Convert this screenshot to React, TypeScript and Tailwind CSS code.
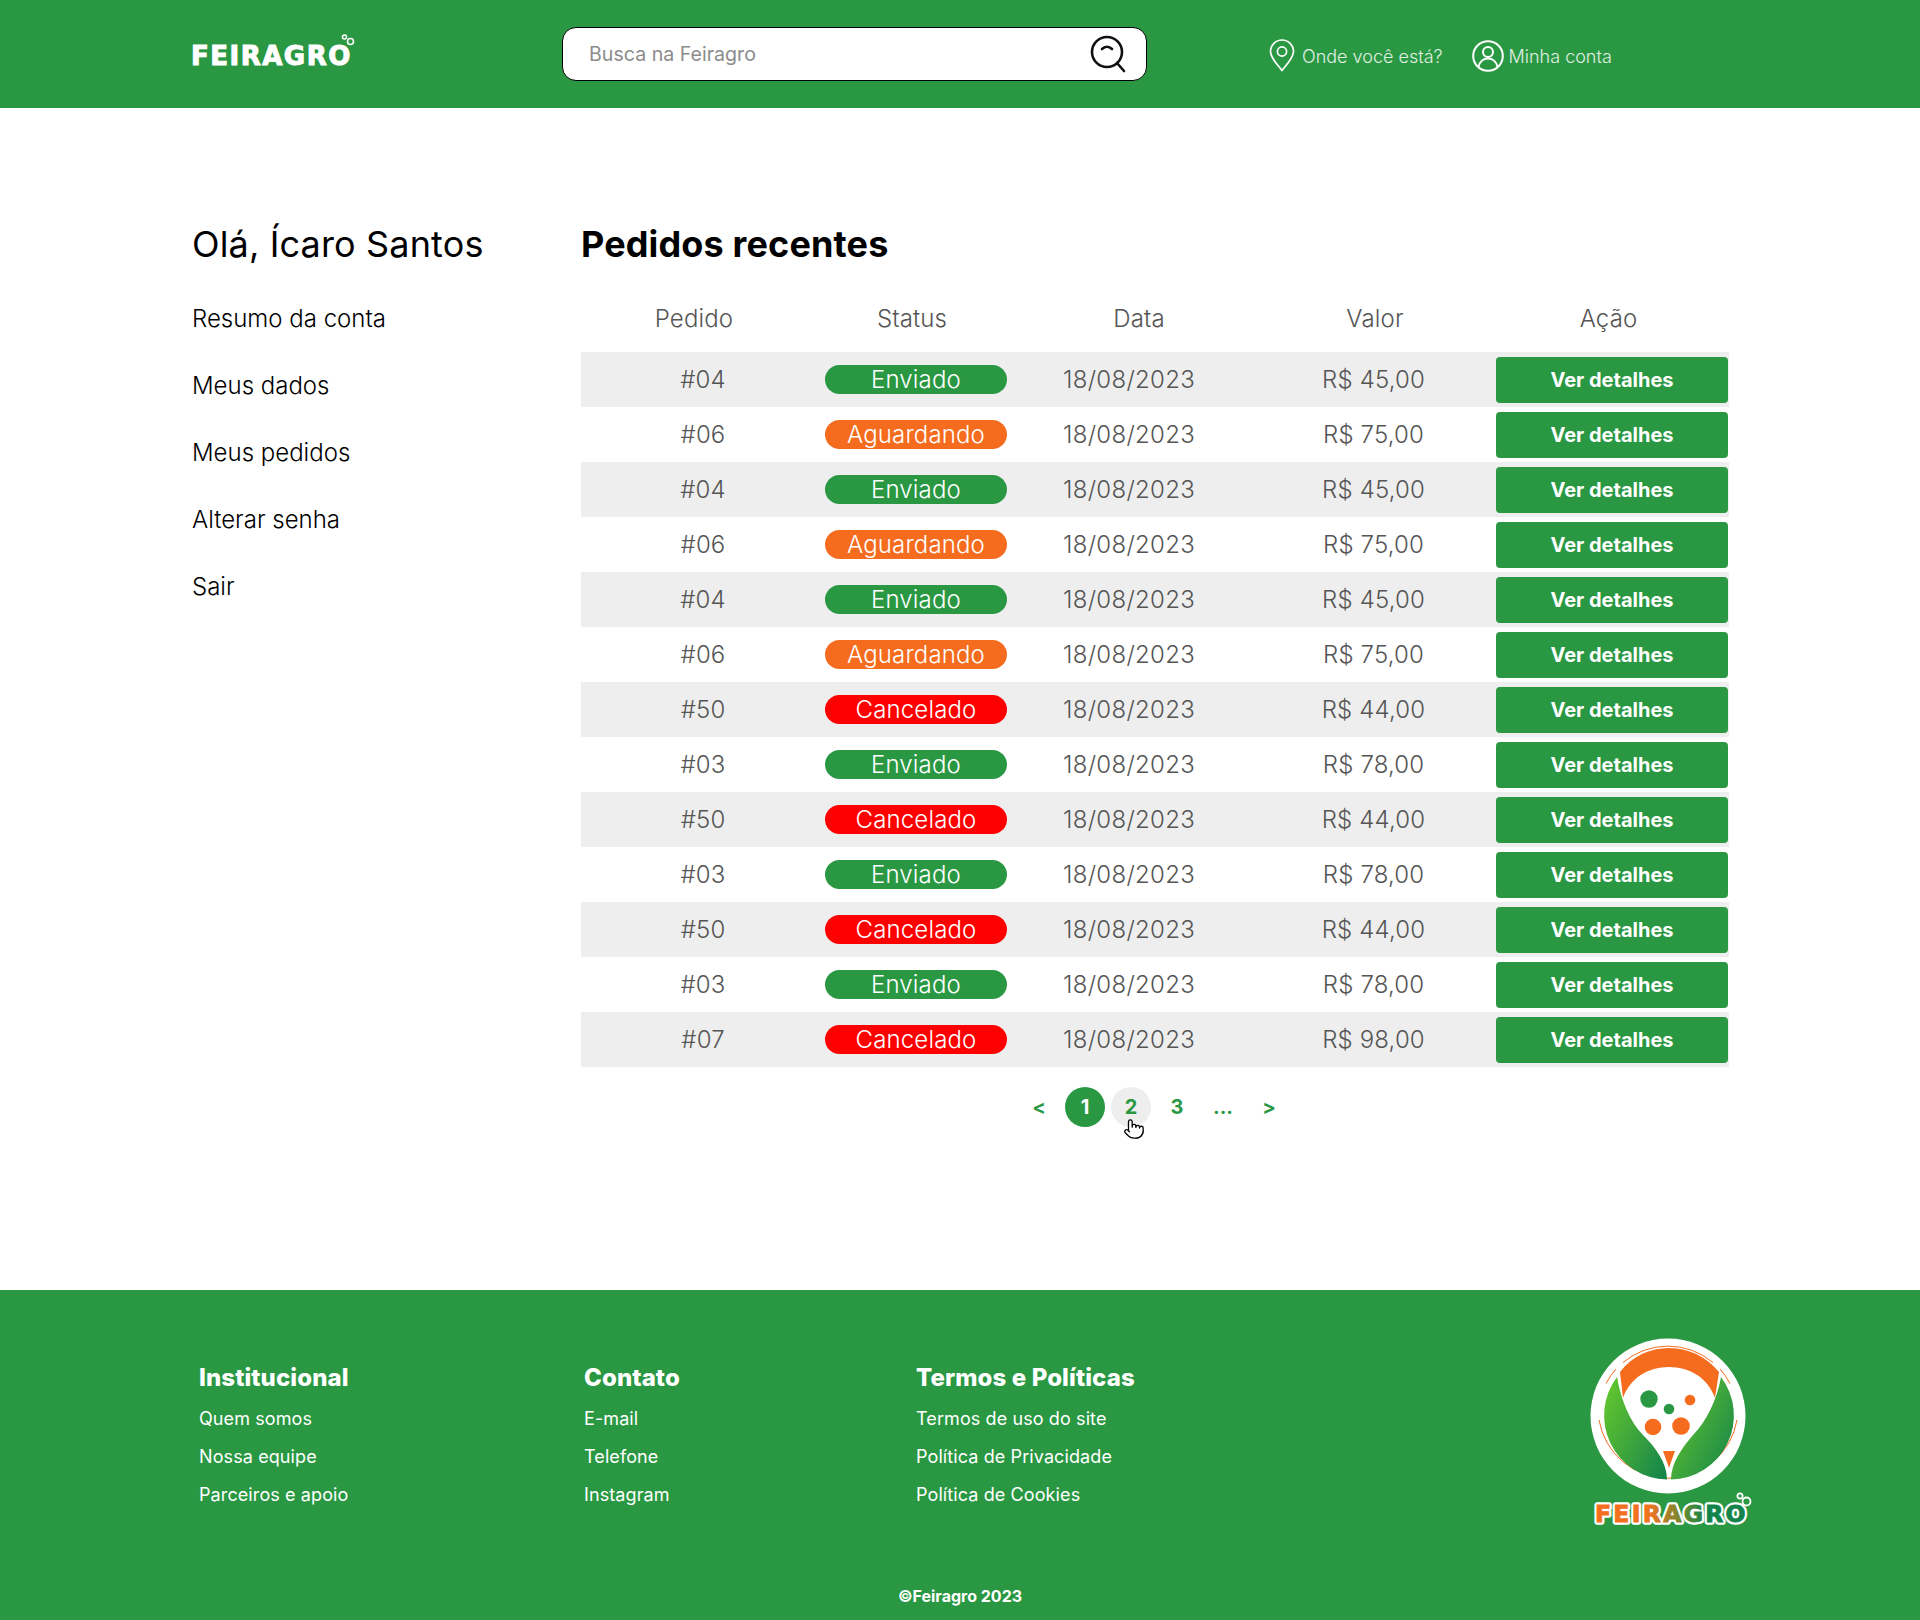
import React from 'react';
import { Pointer } from 'lucide-react';

const GREEN = 'bg-[#2a9843]';

type Status = 'Enviado' | 'Aguardando' | 'Cancelado';

const orders: { id: string; status: Status; value: string }[] = [
  { id: '#04', status: 'Enviado', value: 'R$ 45,00' },
  { id: '#06', status: 'Aguardando', value: 'R$ 75,00' },
  { id: '#04', status: 'Enviado', value: 'R$ 45,00' },
  { id: '#06', status: 'Aguardando', value: 'R$ 75,00' },
  { id: '#04', status: 'Enviado', value: 'R$ 45,00' },
  { id: '#06', status: 'Aguardando', value: 'R$ 75,00' },
  { id: '#50', status: 'Cancelado', value: 'R$ 44,00' },
  { id: '#03', status: 'Enviado', value: 'R$ 78,00' },
  { id: '#50', status: 'Cancelado', value: 'R$ 44,00' },
  { id: '#03', status: 'Enviado', value: 'R$ 78,00' },
  { id: '#50', status: 'Cancelado', value: 'R$ 44,00' },
  { id: '#03', status: 'Enviado', value: 'R$ 78,00' },
  { id: '#07', status: 'Cancelado', value: 'R$ 98,00' },
];

const statusColor: Record<Status, string> = {
  Enviado: 'bg-[#2a9843]',
  Aguardando: 'bg-[#f56c1e]',
  Cancelado: 'bg-[#ff0000]',
};

const footerCols = [
  { title: 'Institucional', width: 'w-[385px]', links: ['Quem somos', 'Nossa equipe', 'Parceiros e apoio'] },
  { title: 'Contato', width: 'w-[332px]', links: ['E-mail', 'Telefone', 'Instagram'] },
  { title: 'Termos e Políticas', width: 'w-[400px]', links: ['Termos de uso do site', 'Política de Privacidade', 'Política de Cookies'] },
];

function HeaderLogo() {
  return (
    <div className="relative w-[165px] h-[36px]">
      <span className="absolute left-[-1px] bottom-[2px] font-['DejaVu_Sans',sans-serif] text-[26px] leading-[28px] font-bold tracking-[1.5px] text-white [-webkit-text-stroke:1px_white]">FEIRAGRO</span>
      <svg className="absolute left-[148px] top-[-2px]" width="16" height="16" viewBox="0 0 16 16" fill="none" stroke="white" strokeWidth="1.6">
        <circle cx="4.500" cy="3" r="2" />
        <circle cx="10.500" cy="7.500" r="3" />
      </svg>
    </div>
  );
}

function SearchIcon() {
  return (
    <svg width="38" height="38" viewBox="0 0 38 38" fill="none" stroke="#111" strokeWidth="2.6" strokeLinecap="round">
      <circle cx="18" cy="17" r="15" />
      <path d="M13 14c3-3 7-3 10 0" />
      <path d="M28 28l7 8" />
    </svg>
  );
}

function PinIcon() {
  return (
    <svg width="26" height="33" viewBox="0 0 26 33" fill="none" stroke="white" strokeWidth="1.7">
      <path d="M13 31.500C8 25 1.500 19 1.500 12.500a11.500 11.500 0 0 1 23 0C24.500 19 18 25 13 31.500z" strokeLinejoin="round" />
      <circle cx="13" cy="12.500" r="4.600" />
    </svg>
  );
}

function UserIcon() {
  return (
    <svg width="32" height="32" viewBox="0 0 32 32" fill="none" stroke="white" strokeWidth="2">
      <circle cx="16" cy="16" r="14.800" />
      <circle cx="16" cy="12" r="5" />
      <path d="M6.500 27c1-5.500 5-8.500 9.500-8.500s8.500 3 9.500 8.500" />
    </svg>
  );
}

function FooterLogo() {
  return (
    <svg width="166" height="196" viewBox="0 0 166 196" className="block">
      <defs>
        <linearGradient id="leaf" x1="0" y1="0.1" x2="1" y2="0.9">
          <stop offset="0" stopColor="#63c72c" />
          <stop offset="0.5" stopColor="#3fa63c" />
          <stop offset="1" stopColor="#15864a" />
        </linearGradient>
        <linearGradient id="word" x1="0" y1="0" x2="1" y2="0">
          <stop offset="0" stopColor="#f56c1e" />
          <stop offset="0.36" stopColor="#ef7420" />
          <stop offset="0.58" stopColor="#6a8a30" />
          <stop offset="0.72" stopColor="#14834a" />
          <stop offset="1" stopColor="#14834a" />
        </linearGradient>
      </defs>
      <circle cx="78" cy="78" r="77.500" fill="#fff" />
      <g fill="none" stroke="#f56c1e" strokeWidth="1">
        <path d="M33 24.500A70 70 0 0 1 123 24.500" />
        <path d="M16 45.500A70 70 0 0 1 26 31" />
        <path d="M130 31A70 70 0 0 1 140 45.500" />
        <path d="M9 82A70 70 0 0 0 147 82" />
      </g>
      <path d="M27 39A64 64 0 0 0 77 141.500C77 125 66 110 53 97C40 84 31 62 27 39z" fill="url(#leaf)" />
      <path d="M131 39A64 64 0 0 1 81 141.500C81 125 92 110 103 97C116 84 127 62 131 39z" fill="url(#leaf)" />
      <path d="M30 34C42 18 60 10 79 10C98 10 116 18 129 34L125 60C118 40 100 29 79 29C58 29 40 40 33 60z" fill="#f56c1e" />
      <path d="M73 113h12l-5 14-1 3-1-3z" fill="#f56c1e" />
      <circle cx="59" cy="61" r="8.700" fill="#2a9843" />
      <circle cx="100" cy="62" r="5.300" fill="#f56c1e" />
      <circle cx="79" cy="71" r="5.300" fill="#2a9843" />
      <circle cx="63" cy="89" r="8.300" fill="#f56c1e" />
      <circle cx="91" cy="88" r="8.800" fill="#f56c1e" />
      <text x="5" y="184" fontFamily="'DejaVu Sans', sans-serif" fontWeight="700" fontSize="23.500" letterSpacing="2.300" fill="#fff" stroke="#fff" strokeWidth="5.500" strokeLinejoin="round">FEIRAGRO</text>
      <text x="5" y="184" fontFamily="'DejaVu Sans', sans-serif" fontWeight="700" fontSize="23.500" letterSpacing="2.300" fill="url(#word)" stroke="url(#word)" strokeWidth="0.900">FEIRAGRO</text>
      <g fill="none" stroke="#fff" strokeWidth="1.800">
        <circle cx="150" cy="158" r="2.600" />
        <circle cx="156.500" cy="163.500" r="4" />
      </g>
    </svg>
  );
}

export default function App() {
  return (
    <div className="w-[1920px] h-[1620px] bg-white flex flex-col font-['Inter',sans-serif] overflow-hidden">
      <header className={`${GREEN} h-[108px] shrink-0 flex items-center pl-[192px]`}>
        <div className="w-[370px]"><HeaderLogo /></div>
        <div className="w-[585px] h-[54px] bg-white border border-black rounded-[14px] flex items-center justify-between pl-[26px] pr-[19px]">
          <span className="pt-[2px] text-[19.6px] text-[#8c8c8c]">Busca na Feiragro</span>
          <SearchIcon />
        </div>
        <div className="ml-[122px] flex items-center gap-[7px] pt-[2px]">
          <PinIcon />
          <span className="text-[18px] font-light text-white/85 pt-[2px]">Onde você está?</span>
        </div>
        <div className="ml-[29px] flex items-center gap-[5px] pt-[3px]">
          <UserIcon />
          <span className="text-[18px] font-light text-white/85 pt-[1px]">Minha conta</span>
        </div>
      </header>

      <main className="h-[1182px] shrink-0 flex pl-[192px] pt-[114px]">
        <aside className="w-[389px]">
          <h1 className="text-[36px] leading-[44px] tracking-[0.15px] text-black">Olá, Ícaro Santos</h1>
          <nav className="mt-[38px] flex flex-col gap-[38px] text-[24px] leading-[29px] font-light text-black">
            <a>Resumo da conta</a>
            <a>Meus dados</a>
            <a>Meus pedidos</a>
            <a>Alterar senha</a>
            <a>Sair</a>
          </nav>
        </aside>

        <section className="w-[1148px]">
          <h2 className="text-[36px] leading-[44px] tracking-[0.15px] font-bold text-black">Pedidos recentes</h2>
          <div className="mt-[38px] grid grid-cols-[226px_210px_244px_228px_239px] text-[24px] leading-[29px] font-light tracking-[0.15px] text-[#555555] text-center">
            <span>Pedido</span>
            <span>Status</span>
            <span>Data</span>
            <span>Valor</span>
            <span>Ação</span>
          </div>
          <div className="mt-[19px]">
            {orders.map((o, i) => (
              <div key={i} className={`h-[55px] grid grid-cols-[244px_182px_244px_245px_232px] items-center text-[24px] font-light tracking-[0.15px] text-[#555555] text-center ${i % 2 === 0 ? 'bg-[#eeeeee]' : 'bg-white'}`}>
                <span>{o.id}</span>
                <span className={`h-[29px] rounded-full text-white leading-[29px] ${statusColor[o.status]}`}>{o.status}</span>
                <span className="tracking-[0.3px]">18/08/2023</span>
                <span>{o.value}</span>
                <button className={`${GREEN} h-[46px] rounded-[4px] text-[20px] font-bold tracking-normal text-white`}>Ver detalhes</button>
              </div>
            ))}
          </div>
          <div className="relative mt-[20px] ml-[438px] flex items-center h-[40px] text-[20px] font-bold text-[#2a9843]">
            <span className="w-[40px] text-center mr-[6px]">&lt;</span>
            <span className={`${GREEN} w-[40px] h-[40px] rounded-full flex items-center justify-center text-white`}>1</span>
            <span className="ml-[6px] w-[40px] h-[40px] rounded-full bg-[#eeeeee] flex items-center justify-center">2</span>
            <span className="ml-[6px] w-[40px] text-center">3</span>
            <span className="ml-[6px] w-[40px] text-center">...</span>
            <span className="ml-[6px] w-[40px] text-center">&gt;</span>
            <Pointer size={22} fill="white" stroke="black" strokeWidth={1.4} className="absolute left-[104px] top-[31px]" />
          </div>
        </section>
      </main>

      <footer className={`${GREEN} relative flex-1 text-white`}>
        <div className="flex pl-[199px] pt-[73px]">
          {footerCols.map((col) => (
            <div key={col.title} className={col.width}>
              <h3 className="text-[24px] leading-[29px] font-extrabold tracking-[0.1px]">{col.title}</h3>
              <ul className="mt-[16px] flex flex-col gap-[16px] text-[18px] leading-[22px] tracking-[0.1px]">
                {col.links.map((l) => <li key={l}>{l}</li>)}
              </ul>
            </div>
          ))}
        </div>
        <div className="absolute left-[1590px] top-[48px]"><FooterLogo /></div>
        <p className="absolute left-0 right-0 top-[296px] text-center text-[16px] leading-[20px] font-bold">©Feiragro 2023</p>
      </footer>
    </div>
  );
}
